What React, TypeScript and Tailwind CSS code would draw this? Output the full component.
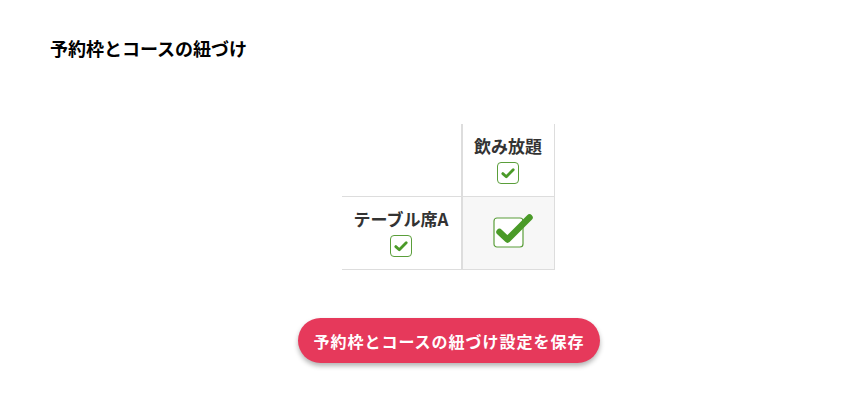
const font = { fontFamily: '"Noto Sans CJK JP", "Noto Sans", sans-serif' };

function SmallCheck() {
  return (
    <span className="flex h-[22px] w-[22px] items-center justify-center rounded-[4px] border border-[#5a9e3a] bg-white">
      <svg width="14" height="11" viewBox="0 0 14 11">
        <path d="M1.8 5.6 L5.3 8.8 L12.2 1.8" fill="none" stroke="#4a9a28" strokeWidth="2.8" strokeLinecap="round" strokeLinejoin="round" />
      </svg>
    </span>
  );
}

function BigCheck() {
  return (
    <svg width="44" height="36" viewBox="0 0 44 36">
      <rect x="1" y="6" width="29" height="29" rx="3" fill="white" stroke="#5a9e3a" strokeWidth="1.2" />
      <path d="M6.5 20 L14.5 27.5 L36.5 5.5" fill="none" stroke="#4a9a28" strokeWidth="6.5" strokeLinecap="round" strokeLinejoin="round" />
    </svg>
  );
}

export default function App() {
  return (
    <div className="h-[402px] w-[848px] bg-white text-[#333]" style={font}>
      <h2 className="pl-[50px] pt-[36px] text-[18px] font-bold leading-[24px] text-black">予約枠とコースの紐づけ</h2>

      <div className="mt-[64px] flex justify-center">
        <div className="ml-[48px] flex flex-col">
          {/* header row */}
          <div className="flex">
            <div className="h-[73px] w-[120px] border-b border-r border-[#ddd]" />
            <div className="flex h-[73px] w-[93px] flex-col items-center border-b border-r border-l border-[#ddd] pt-[10px]">
              <span className="text-[17px] font-bold leading-[24px]">飲み放題</span>
              <span className="mt-[4px]"><SmallCheck /></span>
            </div>
          </div>
          {/* row */}
          <div className="flex">
            <div className="flex h-[73px] w-[120px] flex-col items-center border-b border-r border-[#ddd] pt-[10px]">
              <span className="text-[17px] font-bold leading-[24px]">テーブル席A</span>
              <span className="mt-[4px]"><SmallCheck /></span>
            </div>
            <div className="flex h-[73px] w-[93px] items-center justify-center border-b border-r border-l border-[#ddd] bg-[#f7f7f7] pb-[6px] pl-[14px]">
              <BigCheck />
            </div>
          </div>
        </div>
      </div>

      <div className="mt-[48px] flex justify-center">
        <button className="ml-[50px] h-[45px] w-[302px] rounded-full bg-[#e6395b] text-[16px] font-bold tracking-[1px] text-white shadow-[0_3px_5px_rgba(0,0,0,0.3)]">
          予約枠とコースの紐づけ設定を保存
        </button>
      </div>
    </div>
  );
}
